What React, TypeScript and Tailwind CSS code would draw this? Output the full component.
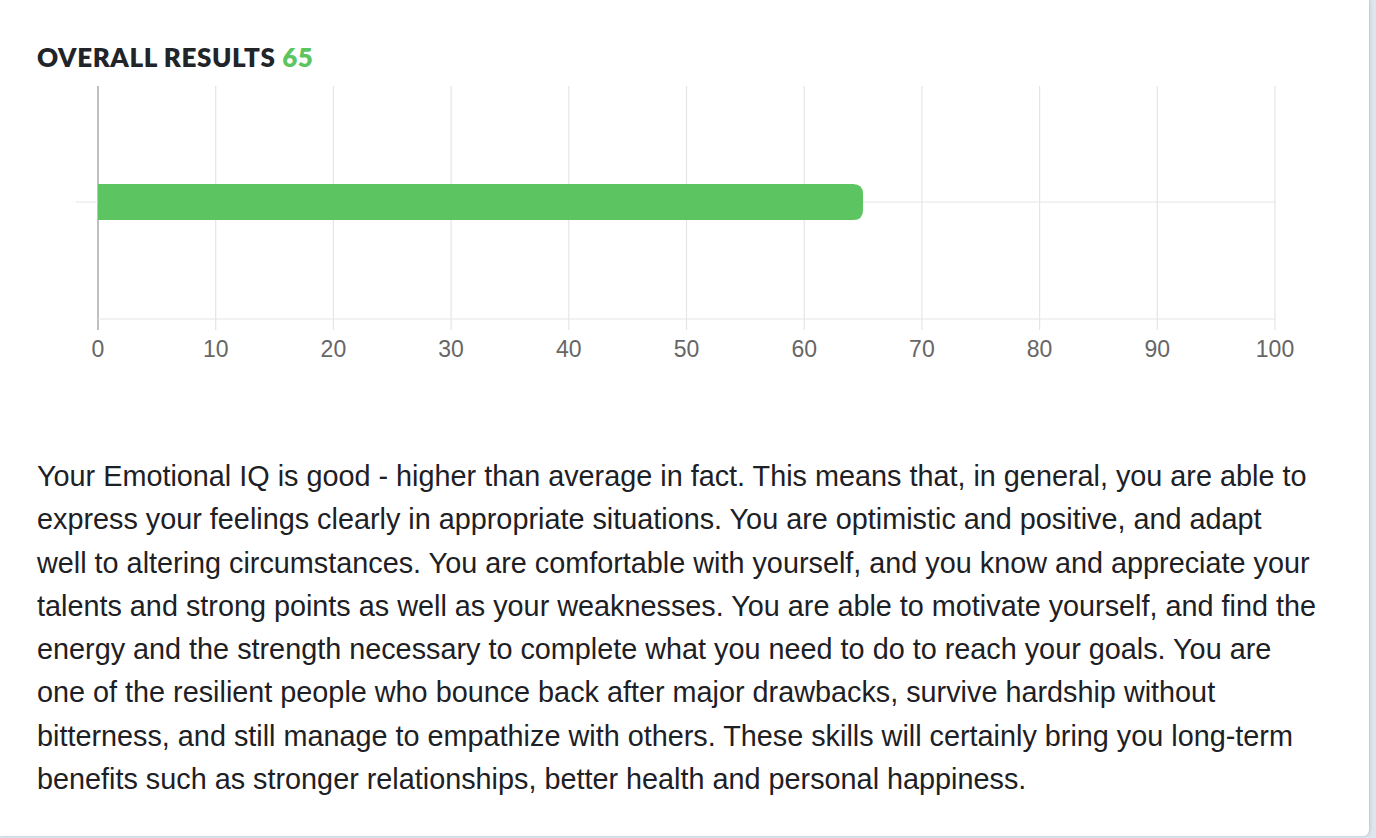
import React from "react";

const ticks = [0, 10, 20, 30, 40, 50, 60, 70, 80, 90, 100];
const score = 65;

// broken the way the original page wraps
const lines = [
  "Your Emotional IQ is good - higher than average in fact. This means that, in general, you are able to",
  "express your feelings clearly in appropriate situations. You are optimistic and positive, and adapt",
  "well to altering circumstances. You are comfortable with yourself, and you know and appreciate your",
  "talents and strong points as well as your weaknesses. You are able to motivate yourself, and find the",
  "energy and the strength necessary to complete what you need to do to reach your goals. You are",
  "one of the resilient people who bounce back after major drawbacks, survive hardship without",
  "bitterness, and still manage to empathize with others. These skills will certainly bring you long-term",
  "benefits such as stronger relationships, better health and personal happiness.",
];

// chart geometry, in svg units
const x0 = 61;
const plotW = 1177;
const step = plotW / 10;

function ResultChart({ value }: { value: number }) {
  const barEnd = x0 + (plotW * value) / 100;
  return (
    <svg width="1300" height="300" className="block">
      {ticks.map((t, i) => (
        <line
          key={t}
          x1={x0 + step * i}
          x2={x0 + step * i}
          y1={6}
          y2={250}
          stroke={i === 0 ? "#ababab" : "#e5e5e5"}
          strokeWidth={i === 0 ? 1.5 : 1.2}
        />
      ))}
      <line x1={39} x2={x0 + plotW} y1={122} y2={122} stroke="#e5e5e5" strokeWidth={1.2} />
      <line x1={x0} x2={x0 + plotW} y1={239} y2={239} stroke="#e5e5e5" strokeWidth={1.2} />
      <path
        d={`M${x0} 104 H${barEnd - 10} Q${barEnd} 104 ${barEnd} 114 V130 Q${barEnd} 140 ${barEnd - 10} 140 H${x0} Z`}
        fill="#5cc561"
      />
      {ticks.map((t, i) => (
        <text
          key={t}
          x={x0 + step * i}
          y={277}
          textAnchor="middle"
          fill="#666666"
          fontSize="23"
          fontFamily="'Liberation Sans', Arial, sans-serif"
        >
          {t}
        </text>
      ))}
    </svg>
  );
}

export default function App() {
  return (
    <div className="flex h-[838px] w-full overflow-hidden bg-[#dfe5ec]">
      <div className="flex h-[836px] w-[1369px] flex-col rounded-br-[6px] bg-white pl-[37px] pr-[20px] shadow-[1px_0_3px_rgba(150,165,185,0.5)]">
        <h2 className="mt-[42px] font-['Lato',sans-serif] text-[26px] font-extrabold leading-[30px] tracking-[0.6px] text-[#212428]">
          OVERALL RESULTS <span className="text-[#5cc561]">{score}</span>
        </h2>
        <div className="mt-[8px]">
          <ResultChart value={score} />
        </div>
        <p className="mt-[75px] whitespace-nowrap font-['Liberation_Sans',Arial,sans-serif] text-[28.8px] leading-[43.3px] text-[#1d2024]">
          {lines.map((line, i) => (
            <React.Fragment key={i}>
              {line}
              {i < lines.length - 1 && <br />}
            </React.Fragment>
          ))}
        </p>
      </div>
    </div>
  );
}
